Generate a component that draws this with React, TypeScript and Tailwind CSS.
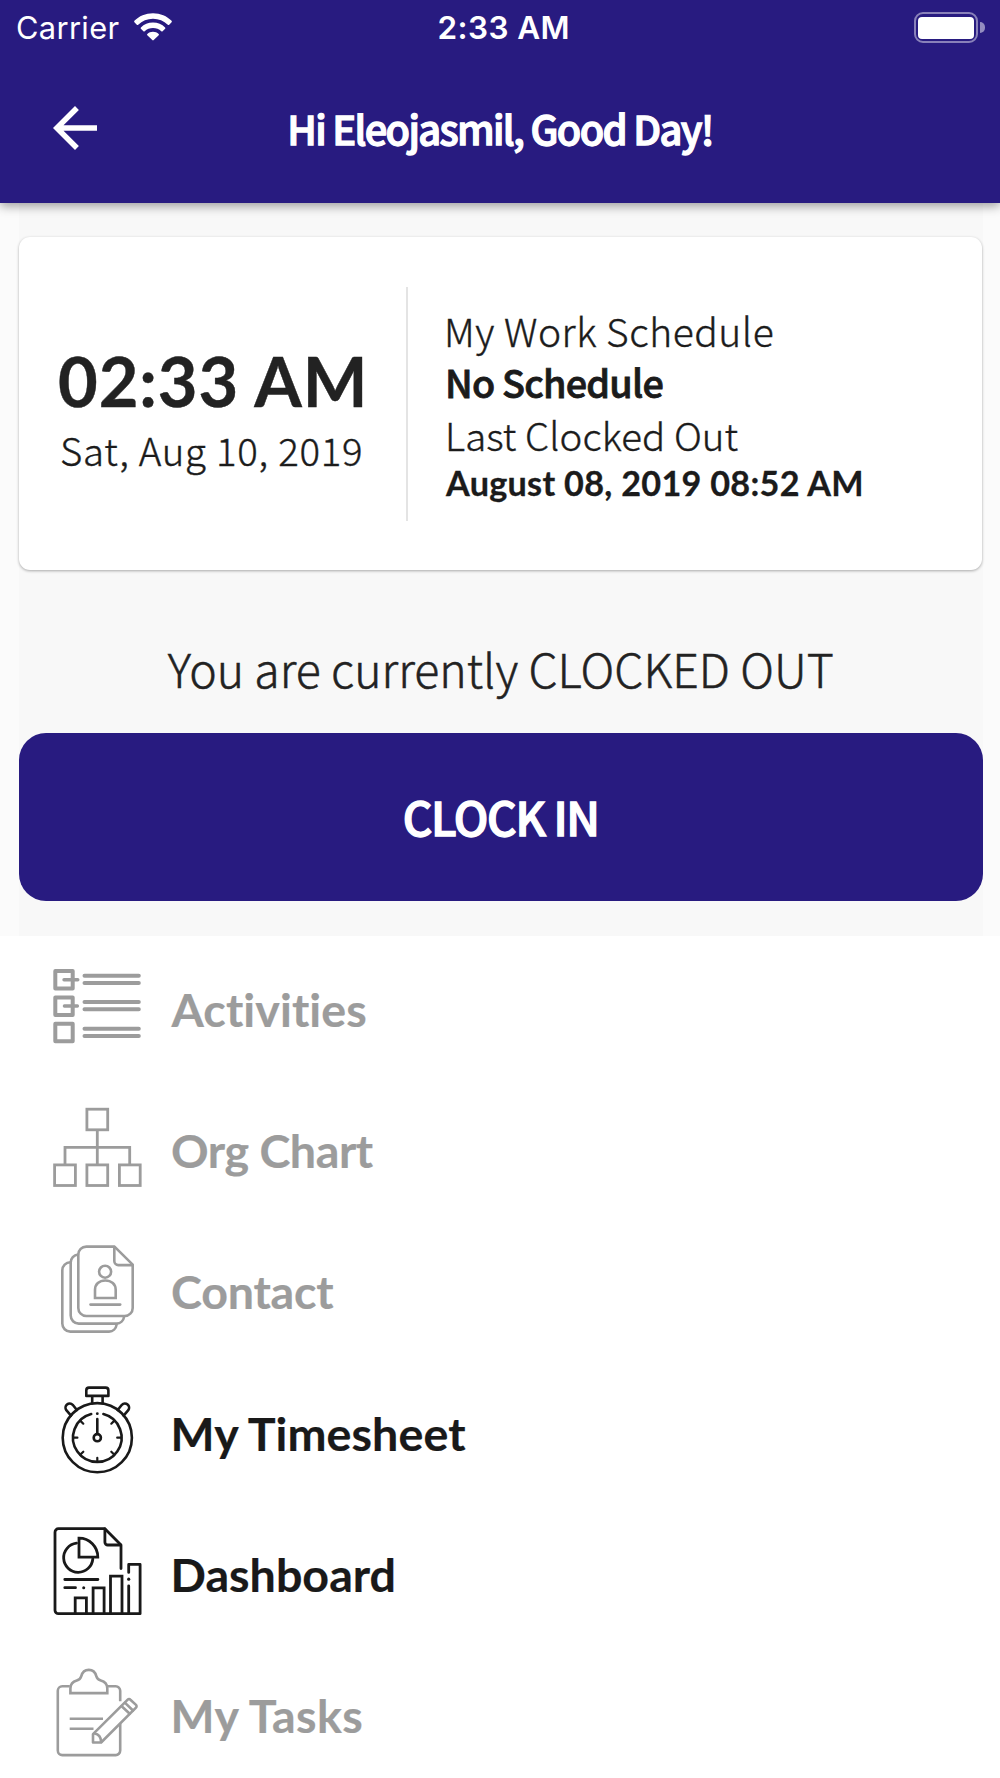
import React from "react";
import { MdArrowBack } from "react-icons/md";

type IconProps = { children: React.ReactNode; width?: number };

function Icon({ children, width = 2.6 }: IconProps) {
  return (
    <svg
      className="h-[88px] w-[88px] shrink-0 overflow-visible"
      viewBox="0 0 88 88"
      fill="none"
      stroke="currentColor"
      strokeWidth={width}
      strokeLinecap="round"
      strokeLinejoin="round"
    >
      {children}
    </svg>
  );
}

const ActivitiesIcon = () => (
  <Icon width={4}>
    <rect x="2.3" y="9" width="17.4" height="17.4" />
    <rect x="2.3" y="35.6" width="17.4" height="17.4" />
    <rect x="2.3" y="61.8" width="17.4" height="17.4" />
    <path d="M11 17.7H24.8M11.4 44H24.4" strokeWidth="3.4" />
    <path d="M31.5 13.7H85.8M31.5 20.9H85.8M31.5 40.1H85.8M31.5 47.3H85.8M31.5 66.8H85.8M31.5 74H85.8" />
  </Icon>
);

const OrgChartIcon = () => (
  <Icon width={2.8}>
    <g strokeLinejoin="miter" strokeLinecap="butt">
      <rect x="33.9" y="6.2" width="20.8" height="20.6" />
      <rect x="1.6" y="61.9" width="20.8" height="20.6" />
      <rect x="33.9" y="61.9" width="20.8" height="20.6" />
      <rect x="66.4" y="61.9" width="20.8" height="20.6" />
      <path d="M44.3 27.5V61M12 61V44.3H76.7V61" />
    </g>
  </Icon>
);

const ContactIcon = () => (
  <Icon>
    <g transform="translate(0 -0.7)">
      <path d="M61.5 2.3H33.3a8 8 0 0 0-8 8V63.7a8 8 0 0 0 8 8H71.7a8 8 0 0 0 8-8V20.3Z" />
      <path d="M61.3 2.8V16.8a4 4 0 0 0 4 4H79.3" />
      <path d="M25 10.2a8 8 0 0 0-7.3 8V71.3a8 8 0 0 0 8 8H63.5a8 8 0 0 0 7.6-7" />
      <path d="M17.4 18a8 8 0 0 0-8.1 8V79.3a8 8 0 0 0 8 8H56a8 8 0 0 0 7.6-7" />
      <circle cx="52.1" cy="27.4" r="6" />
      <path d="M42 53.7V45.5c0-5.5 4.2-9.3 10.3-9.3s10.4 3.8 10.4 9.3V53.7Z" strokeLinejoin="miter" />
      <path d="M37.5 60.3H67.2" />
    </g>
  </Icon>
);

const TimesheetIcon = () => (
  <Icon>
    <circle cx="44.3" cy="51.7" r="34.6" />
    <path d="M50.4 28.1A24.3 24.3 0 1 1 38.2 28.1" />
    <path d="M36 1.6H52.6a2.8 2.8 0 0 1 2.8 2.8V9.9H33.3V4.4A2.8 2.8 0 0 1 36 1.6ZM39.2 10V17.2M49.6 10V17.2" />
    <path d="M18 29.6 13.3 24.2a4.2 4.2 0 0 1 6.4-5.4L23.9 24M70.6 29.6 75.3 24.2a4.2 4.2 0 0 0-6.4-5.4L64.7 24" />
    <circle cx="44.3" cy="51.7" r="3.6" />
    <path d="M44.3 33V47.8" />
    <path
      d="M20.4 51.7H24.4M64.2 51.7H68.2M44.3 71.8V75.8M27.2 34.6 30.3 37.7M61.4 34.6 58.3 37.7M27.2 68.8 30.3 65.7M61.4 68.8 58.3 65.7"
      strokeWidth="2.2"
    />
    <circle cx="44.3" cy="27.7" r="1.4" fill="currentColor" stroke="none" />
  </Icon>
);

const DashboardIcon = () => (
  <Icon width={2.8}>
    <path d="M68 41.5V18L51.9 1.7H5.5A3.5 3.5 0 0 0 2 5.2V83.2a3.5 3.5 0 0 0 3.5 3.5H87.1V37.4H75.7V45.4M75.7 58.8V86.4" />
    <path d="M51.9 2V15.2a2.8 2.8 0 0 0 2.8 2.8H67.6" />
    <path d="M22.2 86V70.8H33.4V86M40.1 86V60.8H51.1V86M57.5 86V49.1H69V86" strokeLinejoin="miter" />
    <path d="M23.5 16.2A14.6 14.6 0 1 0 39.8 32" />
    <path d="M26 11.2A18.8 18.8 0 0 1 44.8 30.2H26Z" strokeLinejoin="miter" />
    <path d="M11.8 52.5H44.9M11.8 60.7H22.5" />
    <circle cx="30.7" cy="60.7" r="1.5" fill="currentColor" stroke="none" />
    <circle cx="75.7" cy="52.2" r="1.6" fill="currentColor" stroke="none" />
  </Icon>
);

const TasksIcon = () => (
  <Icon>
    <g transform="translate(-0.5 0)">
      <path
        d="M17.3 17.3H9.8a4.5 4.5 0 0 0-4.5 4.5V81.6a4.5 4.5 0 0 0 4.5 4.5H63.2a4.5 4.5 0 0 0 4.5-4.5V54.5M55.3 17.3H63.2a4.5 4.5 0 0 1 4.5 4.5V32.3"
        strokeLinecap="butt"
      />
      <path
        d="M17.9 24.1V19.5c0-4.8 2.8-7 6.4-8 2.6-.7 3.7-1.8 4.4-4.2C29.8 3.3 32.5.9 36.3.9S42.8 3.3 43.9 7.3c.7 2.4 1.8 3.5 4.4 4.2 3.6 1 6.5 3.2 6.5 8V24.1Z"
        strokeLinejoin="miter"
      />
      <path d="M17.2 49.7H50.5M17.2 59.7H41" strokeLinecap="butt" />
      <path d="M40.5 73.5V65.2L75.2 30.7a1.9 1.9 0 0 1 2.7 0L83.5 35.9a1.9 1.9 0 0 1 0 2.7L48.6 73.5Z" />
      <path d="M42 64.5c4.5.6 6.5 3.6 6.6 8.5M69.2 37.2 77.2 44.8M72.6 33.9 80.5 41.5" />
    </g>
  </Icon>
);

const items = [
  { label: "Activities", icon: ActivitiesIcon, active: false, text: "ml-[30.5px] tracking-[0.1px]" },
  { label: "Org Chart", icon: OrgChartIcon, active: false, text: "ml-[30px] tracking-[-0.45px]" },
  { label: "Contact", icon: ContactIcon, active: false, text: "ml-[30px] tracking-[-0.2px]" },
  { label: "My Timesheet", icon: TimesheetIcon, active: true, text: "ml-[29.5px] tracking-[0.1px]" },
  { label: "Dashboard", icon: DashboardIcon, active: true, text: "ml-[29.5px] tracking-[0.03px]" },
  { label: "My Tasks", icon: TasksIcon, active: false, text: "ml-[29.5px] tracking-[0.45px]" },
];

function StatusBar() {
  return (
    <div className="grid h-[56px] grid-cols-3 items-center pl-4 pr-[14.5px] font-['Inter',sans-serif]">
      <div className="flex items-center">
        <span className="text-[30.8px] leading-[56px] tracking-[0.35px]">Carrier</span>
        <svg className="-mt-[2px] ml-[15px] h-[28px] w-[38px]" viewBox="0 0 38 28" fill="currentColor">
          <path d="M19 .2C26.3.2 33 3 37.6 7.8c.4.4.4 1 0 1.400L35.200 11.700c-.4.400-1 .400-1.400 0C29.900 7.900 24.700 5.800 19 5.800S8.100 7.900 4.200 11.700c-.4.400-1 .400-1.400 0L.4 9.200C0 8.800 0 8.200.4 7.800 5 3 11.700.2 19 .2Z" />
          <path d="M19 9.600c4.700 0 9 1.800 12.100 4.800.4.400.4 1 0 1.400l-2.500 2.400c-.4.400-.9.400-1.300 0C25.100 16.200 22.200 15.100 19 15.100s-6.100 1.100-8.300 3.100c-.4.400-.9.400-1.300 0L6.900 15.800c-.4-.400-.4-1 0-1.400C10 11.400 14.300 9.600 19 9.600Z" />
          <path d="M19 18.700c2.200 0 4.200.8 5.700 2.200.4.400.4.900 0 1.300l-5 4.900c-.4.400-1 .400-1.400 0l-5-4.900c-.4-.400-.4-.900 0-1.300 1.500-1.400 3.500-2.200 5.700-2.200Z" />
        </svg>
      </div>
      <span className="pl-[6px] text-center text-[31.5px] font-semibold leading-[56px] tracking-[0.4px]">
        2:33 AM
      </span>
      <div className="-mt-px flex items-center justify-end gap-[2px]">
        <div className="h-[31px] w-[64.5px] rounded-[9px] border-[2.5px] border-white/45 p-[2.5px]">
          <div className="h-full w-full rounded-[4px] bg-white" />
        </div>
        <div className="h-[11px] w-[5px] rounded-r-full bg-white/50" />
      </div>
    </div>
  );
}

export default function App() {
  return (
    <div className="flex h-[1778px] w-[1000px] flex-col overflow-hidden bg-white font-['Noto_Sans_CJK_SC',sans-serif] text-[#1b1b1b]">
      <header className="z-10 h-[202.5px] shrink-0 bg-[#281b80] text-white shadow-[0_3px_10px_rgba(0,0,0,0.38)]">
        <StatusBar />
        <div className="grid h-[142px] grid-cols-[200px_1fr_200px] items-center">
          <MdArrowBack className="mt-[2px] ml-[41.5px] h-[66px] w-[66px]" />
          <h1 className="pt-[2px] text-center text-[39.9px] font-medium leading-[60px] tracking-[-1.68px] [-webkit-text-stroke:1.3px_currentColor]">
            Hi Eleojasmil, Good Day!
          </h1>
        </div>
      </header>

      <main className="shrink-0 bg-[#fbfbfb] pr-[17.5px] pl-[19px]">
        <div className="flex h-[733px] flex-col bg-[#f8f8f8] pt-[34.5px]">
          <section className="flex h-[333px] w-[962.5px] shrink-0 rounded-[11px] bg-white shadow-[0_1px_3px_rgba(0,0,0,0.32)]">
            <div className="w-[387px] pt-[111px]">
              <p className="pl-[39px] font-['Lato',sans-serif] text-[68.5px] font-bold leading-[66px] tracking-[0.9px] text-[#222] [-webkit-text-stroke:0.4px_currentColor]">
                02:33 AM
              </p>
              <p className="mt-[11px] pl-[41px] text-[38.4px] font-light leading-[48px] tracking-[0.75px] [-webkit-text-stroke:0.4px_currentColor]">
                Sat, Aug 10, 2019
              </p>
            </div>
            <div className="mt-[50px] h-[234px] w-[2px] bg-[#e4e4e4]" />
            <div className="pt-[68px] pl-[36px]">
              <p className="text-[39px] font-light leading-[51px] tracking-[0.52px] [-webkit-text-stroke:0.4px_currentColor]">
                My Work Schedule
              </p>
              <p className="pl-px text-[37.8px] font-medium leading-[51px] tracking-[-0.8px] [-webkit-text-stroke:0.8px_currentColor]">
                No Schedule
              </p>
              <p className="pl-px text-[38.4px] font-light leading-[54.5px] tracking-[0.1px] [-webkit-text-stroke:0.4px_currentColor]">
                Last Clocked Out
              </p>
              <p className="-mt-px pl-[2px] font-['Lato',sans-serif] text-[34.2px] font-bold leading-[43.5px] tracking-[0.29px] [-webkit-text-stroke:0.3px_currentColor]">
                August 08, 2019 08:52 AM
              </p>
            </div>
          </section>

          <p className="mt-[68px] text-center text-[46.4px] font-light leading-[60px] tracking-[0px] text-[#222] [-webkit-text-stroke:0.5px_currentColor]">
            You are currently CLOCKED OUT
          </p>
          <button className="mt-[34.5px] h-[168px] shrink-0 rounded-[27px] bg-[#281b80] pb-px text-[45.9px] font-medium leading-[60px] tracking-[-1.35px] text-white [-webkit-text-stroke:1.4px_currentColor]">
            CLOCK IN
          </button>
        </div>
      </main>

      <nav className="flex flex-col">
        {items.map(({ label, icon: ItemIcon, active, text }) => (
          <a
            key={label}
            className={`flex h-[141.3px] shrink-0 items-center pl-[53px] ${active ? "text-[#191919]" : "text-[#9c9c9c]"}`}
          >
            <ItemIcon />
            <span
              className={`pt-[5px] font-['Lato',sans-serif] text-[46.6px] font-bold leading-[56px] [-webkit-text-stroke:0.2px_currentColor] ${text}`}
            >
              {label}
            </span>
          </a>
        ))}
      </nav>
    </div>
  );
}
